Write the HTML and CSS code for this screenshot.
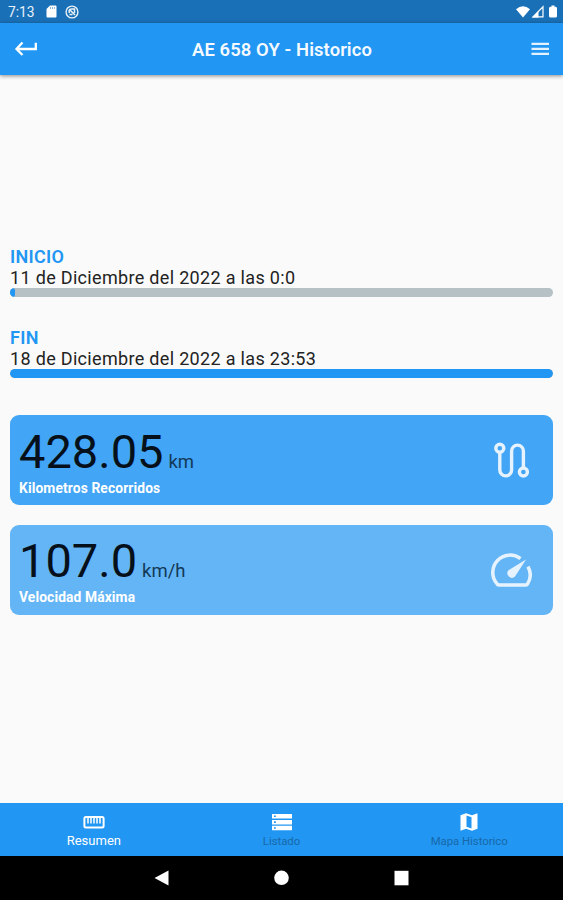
FILE: index.html
```html
<!DOCTYPE html>
<html lang="es">

<head>
    <meta charset="UTF-8" />
    <meta name="viewport" content="width=device-width, initial-scale=1.0" />
    <title>AE 658 OY - Historico</title>
    <link rel="stylesheet" href="styles.css">
</head>

<body>
    <div class="status-bar">
        <span class="clock">7:13</span>
        <svg class="sd" width="11" height="13" viewBox="0 0 11 13">
            <path fill="#fff" d="M4 .5h5.500q1 0 1 1v10q0 1-1 1h-8q-1 0-1-1V4z" />
            <path stroke="#1a70b7" stroke-width=".5" d="M4.500 2v2M6.500 2v2M8.500 2v2" />
        </svg>
        <svg class="sync" width="14" height="14" viewBox="0 0 14 14" fill="none" stroke="#e8f1f8">
            <circle cx="7" cy="7" r="5.900" stroke-width="1.400" />
            <path stroke-width="1.500" d="M4.200 8V5.500Q4.500 4 6.500 4h3v4M5 5l5 5M4.500 9.500h3" />
        </svg>
        <span class="spacer"></span>
        <svg width="42" height="14" viewBox="0 0 42 14">
            <path fill="#fff" d="M0 4.200Q7-1.600 14 4.200L7 12.500z" />
            <path fill="none" stroke="#fff" stroke-width="1.200" d="M17 11.900L27 1.800v10.100z" />
            <path fill="#fff" d="M16 12.500l6.500-6.500v6.500z" />
            <path fill="#fff" d="M35.500.500h3v1.200h1q1.500 0 1.500 1.500v7.800q0 1.500-1.500 1.500h-5Q33 12.500 33 11V3.200q0-1.500 1.500-1.500h1z" />
        </svg>
    </div>

    <header class="app-bar">
        <svg width="24" height="16" viewBox="0 0 24 16" fill="none" stroke="#fff" stroke-width="2.300">
            <path d="M8.500 1.500L2.500 8l6 6M2.500 8h19.300V1.800" />
        </svg>
        <h1>AE 658 OY - Historico</h1>
        <svg width="24" height="16" viewBox="0 0 24 16" stroke="#e3f2fe" stroke-width="2.400">
            <path d="M5.500 2.900H23M5.500 7.900H23M5.500 12.900H23" />
        </svg>
    </header>

    <main class="content">
        <section class="date">
            <h2>INICIO</h2>
            <p>11 de Diciembre del 2022 a las 0:0</p>
            <div class="track"><div class="fill" style="width: 1%"></div></div>
        </section>

        <section class="date">
            <h2>FIN</h2>
            <p>18 de Diciembre del 2022 a las 23:53</p>
            <div class="track"><div class="fill" style="width: 100%"></div></div>
        </section>

        <section class="card">
            <div>
                <div class="value">428.05<span class="unit">km</span></div>
                <div class="label">Kilometros Recorridos</div>
            </div>
            <svg width="42" height="42" viewBox="0 0 42 42" fill="none" stroke="#e6f3fe" stroke-width="3.400">
                <circle cx="9.800" cy="9.300" r="4" />
                <path d="M9.800 13.300V31a5.900 5.900 0 0 0 11.800 0V12a5.900 5.900 0 0 1 11.800 0V29" />
                <circle cx="33.400" cy="33" r="4" />
            </svg>
        </section>

        <section class="card light">
            <div>
                <div class="value">107.0<span class="unit">km/h</span></div>
                <div class="label">Velocidad Máxima</div>
            </div>
            <svg width="42" height="42" viewBox="0 0 42 42">
                <path fill="none" stroke="#e6f3fe" stroke-width="3.500" d="M30.500 8.800A17.300 17.300 0 0 0 6.800 33.700q.7 1.500 2.200 1.500h26.600q1.500 0 2.200-1.500a17.300 17.300 0 0 0 .2-16.900" transform="translate(0 .8)" />
                <path fill="#e6f3fe" d="M36 10.500L25 27.500a4.500 4.500 0 0 1-6.500-6.200z" />
            </svg>
        </section>
    </main>

    <nav class="tabs">
        <a class="tab active">
            <svg width="22" height="18" viewBox="0 0 22 18">
                <rect x="1.400" y="4" width="19.200" height="10.500" rx="1.500" fill="none" stroke="#fff" stroke-width="2" />
                <path stroke="#fff" stroke-width="1.500" d="M5 4v6.500M8 4v6.500M11 4v6.500M14 4v6.500M17 4v6.500" />
            </svg>
            <span>Resumen</span>
        </a>
        <a class="tab">
            <svg width="22" height="18" viewBox="0 0 22 18">
                <path fill="#fff" d="M1 1h20v4.500H1zM1 6.900h20v4.500H1zM1 12.800h20v4.500H1z" />
                <path stroke="#2196f3" stroke-width="1.600" d="M3 3.200h1.800M3 9.100h1.800M3 15h1.800" />
            </svg>
            <span>Listado</span>
        </a>
        <a class="tab">
            <svg width="22" height="18" viewBox="0 0 22 18">
                <path fill="#fff" d="M2.500 2.200L8 .3l6 2L19.500.3v15.500L14 17.800l-6-2-5.500 2z" />
                <path fill="#2196f3" d="M8.500 2.600l5 1.700v11.200l-5-1.700z" />
            </svg>
            <span>Mapa Historico</span>
        </a>
    </nav>

    <div class="system-nav">
        <svg width="16" height="16" viewBox="0 0 16 16"><path fill="#fff" d="M14.500 .500v15L.500 8z" /></svg>
        <svg width="16" height="16" viewBox="0 0 16 16"><circle cx="7.500" cy="7.800" r="7.300" fill="#fff" /></svg>
        <svg width="16" height="16" viewBox="0 0 16 16"><path fill="#fff" d="M.500.800h14v14.500h-14z" /></svg>
    </div>
</body>

</html>
```
FILE: styles.css
```css
:root {
    --primary: #2196f3;
    --primary-dark: #1a70b7;
    --background: #fafafa;
}

* {
    box-sizing: border-box;
}

body {
    margin: 0;
    height: 100vh;
    display: flex;
    flex-direction: column;
    font-family: Roboto, sans-serif;
    background: var(--background);
    color: #111;
}

svg {
    display: block;
    flex-shrink: 0;
}

h1,
h2,
p {
    margin: 0;
}

.status-bar {
    height: 23px;
    padding: 0 5px 0 8px;
    display: flex;
    align-items: center;
    background: var(--primary-dark);
    color: #e8f1f8;
}

.clock {
    width: 38px;
    font-size: 13.8px;
}

.sync {
    margin-left: 8px;
}

.spacer {
    flex: 1;
}

.app-bar {
    height: 52px;
    padding: 0 13px 0 14px;
    display: flex;
    align-items: center;
    justify-content: space-between;
    background: var(--primary);
    color: #f4faff;
    box-shadow: 0 1px 4px rgba(0, 0, 0, 0.45);
}

.app-bar h1 {
    font-size: 18.4px;
    font-weight: 600;
    letter-spacing: 0.1px;
}

.content {
    flex: 1;
    padding: 171px 10px 0;
}

.date {
    height: 80.500px;
}

.date h2 {
    font-size: 18px;
    line-height: 21px;
    font-weight: 600;
    letter-spacing: 0.3px;
    color: var(--primary);
}

.date p {
    font-size: 18px;
    line-height: 21px;
    letter-spacing: 0.32px;
    color: #222;
}

.track {
    height: 9px;
    border-radius: 5px;
    background: #b5c1c5;
    overflow: hidden;
}

.fill {
    height: 100%;
    border-radius: 5px;
    background: var(--primary);
}

.card {
    height: 90px;
    margin: 8px 0 19.5px;
    padding: 0 21px 0 9px;
    display: flex;
    align-items: center;
    justify-content: space-between;
    border-radius: 9px;
    background: #42a5f5;
}

.card.light {
    background: #64b5f6;
}

.value {
    height: 55px;
    font-size: 47px;
    line-height: 57px;
    color: #06101a;
}

.unit {
    margin-left: 5px;
    font-size: 18.5px;
    color: #123a58;
}

.label {
    font-size: 13.8px;
    line-height: 20px;
    font-weight: 700;
    letter-spacing: 0.12px;
    color: white;
}

.tabs {
    height: 53px;
    display: flex;
    background: var(--primary);
}

.tab {
    flex: 1;
    padding-top: 10px;
    display: flex;
    flex-direction: column;
    align-items: center;
    font-size: 11.3px;
    line-height: 21px;
    color: #1868a8;
}

.tab.active {
    font-size: 13px;
    line-height: 20px;
    color: white;
}

.system-nav {
    height: 44px;
    display: flex;
    align-items: center;
    justify-content: center;
    gap: 104px;
    background: black;
}
```
